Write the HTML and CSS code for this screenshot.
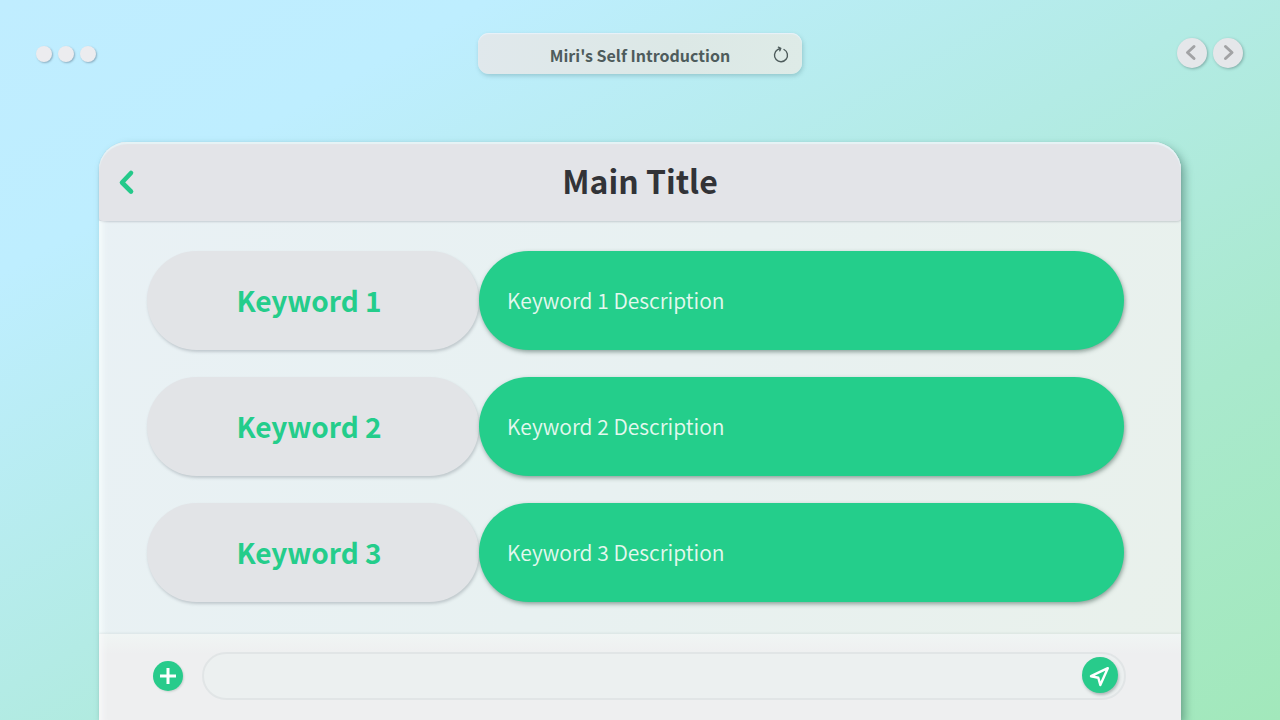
FILE: index.html
```html
<!DOCTYPE html>
<html lang="en">
<head>
<meta charset="utf-8">
<meta name="viewport" content="width=device-width, initial-scale=1">
<title>Miri's Self Introduction</title>
<link rel="stylesheet" href="styles.css">
</head>
<body>

<header class="topbar">
  <div class="dots"><span></span><span></span><span></span></div>
  <div class="address">
    <span class="address-text">Miri's Self Introduction</span>
    <button class="reload" type="button" aria-label="Reload">
      <svg width="18" height="18" viewBox="0 0 18 18"><path d="M12 3.5A6.5 6.5 0 1 1 5.6 3.7L8.2 2.5M6.4 1.2L8.8 2.3L7.8 4.8"/></svg>
    </button>
  </div>
  <nav class="pager">
    <button type="button" aria-label="Previous"><svg width="30" height="30" viewBox="0 0 30 30"><path d="M17 8.5L10.5 14.5L17 20.5"/></svg></button>
    <button type="button" aria-label="Next"><svg width="30" height="30" viewBox="0 0 30 30"><path d="M12.5 8.5L19 14.5L12.5 20.5"/></svg></button>
  </nav>
</header>

<main class="panel">
  <div class="panel-head">
    <button class="back" type="button" aria-label="Back">
      <svg width="18" height="26" viewBox="0 0 18 26"><path d="M14 4L5 13.5L14 22.5"/></svg>
    </button>
    <h1>Main Title</h1>
  </div>

  <dl class="list">
    <div class="row">
      <dt>Keyword 1</dt>
      <dd>Keyword 1 Description</dd>
    </div>
    <div class="row">
      <dt>Keyword 2</dt>
      <dd>Keyword 2 Description</dd>
    </div>
    <div class="row">
      <dt>Keyword 3</dt>
      <dd>Keyword 3 Description</dd>
    </div>
  </dl>

  <form class="composer">
    <button class="add" type="button" aria-label="Add">
      <svg width="30" height="30" viewBox="0 0 30 30"><path d="M15 7V23M7 15H23"/></svg>
    </button>
    <div class="field">
      <input type="text" aria-label="Message">
      <button class="send" type="submit" aria-label="Send">
        <svg width="36" height="36" viewBox="0 0 36 36"><path d="M25.8 11.2L9 19.2L16.3 20.7L18.3 28Z"/></svg>
      </button>
    </div>
  </form>
</main>

</body>
</html>
```
FILE: styles.css
```css
* { box-sizing: border-box; }

body {
  display: flex;
  flex-direction: column;
  min-height: 100vh;
  margin: 0;
  font-family: "Noto Sans CJK KR", "Noto Sans", sans-serif;
  color: #323337;
  background: linear-gradient(to bottom right, #c0edff 0%, #beeeff 19%, #b3ebe5 48%, #a9e9cd 74%, #a2e8bb 100%);
}
button {
  display: block;
  flex: none;
  padding: 0;
  border: 0;
  background: none;
  cursor: pointer;
}
svg {
  display: block;
  fill: none;
  stroke-linecap: round;
  stroke-linejoin: round;
}

/* top bar */
.topbar {
  display: grid;
  grid-template-columns: 1fr 324px 1fr;
  align-items: center;
  padding: 33px 36px 0;
}
.dots { display: flex; gap: 6px; }
.dots span {
  width: 16px;
  height: 16px;
  border-radius: 50%;
  background: #ececef;
  box-shadow: 1px 1px 2px rgba(60, 80, 100, .4);
}
.address {
  display: grid;
  grid-template-columns: 1fr auto 1fr;
  align-items: center;
  height: 41px;
  padding: 2px 12px 0;
  border-radius: 11px;
  background: linear-gradient(100deg, #e0e8ec, #dce8e6 60%, #deebe7);
  box-shadow: inset 0 1px 1px #e9f2fa, 1px 2px 4px rgba(40, 90, 100, .25);
}
.address-text {
  grid-column: 2;
  font-size: 16px;
  font-weight: 700;
  line-height: 24px;
  color: #4e5c5c;
}
.reload { justify-self: end; }
.reload svg { stroke: #4e5c5c; stroke-width: 1.4; }
.pager {
  display: flex;
  justify-content: flex-end;
  gap: 6px;
  padding: 0 1px 2px 0;
}
.pager button {
  border-radius: 50%;
  background: #e5e7ea;
  box-shadow: 1px 1px 3px rgba(50, 80, 80, .4);
}
.pager svg { stroke: #a2a3a5; stroke-width: 3; }

/* window */
.panel {
  display: flex;
  flex: 1;
  flex-direction: column;
  margin: 68px 99px 0;
  border-radius: 28px 28px 0 0;
  background: linear-gradient(120deg, #e9f1f5, #e8f1f1 50%, #e9f1eb);
  box-shadow: 4px 4px 8px rgba(30, 80, 70, .4);
}
.panel-head {
  display: grid;
  grid-template-columns: 1fr auto 1fr;
  align-items: center;
  height: 79px;
  padding: 0 18px;
  border-radius: 28px 28px 4px 4px;
  background: #e3e4e8;
  box-shadow: inset 0 2px 1px #e6f3f6, 0 1px 2px rgba(90, 100, 110, .25);
}
.panel-head h1 {
  margin: 0;
  padding-bottom: 4px;
  font-size: 32px;
  font-weight: 700;
  line-height: 48px;
}
.back { justify-self: start; }
.back svg { stroke: #24c98a; stroke-width: 4.6; }

.list {
  display: flex;
  flex: 1;
  flex-direction: column;
  gap: 27px;
  margin: 0;
  padding: 30px 57px 32px 48px;
  box-shadow: inset 9px 0 6px -5px rgba(246, 252, 252, .8);
}
.row {
  display: grid;
  grid-template-columns: 332fr 645fr;
}
.row dt,
.row dd {
  display: flex;
  align-items: center;
  height: 99px;
  margin: 0;
  padding: 0 28px 1px;
  border-radius: 50px;
}
.row dt {
  justify-content: center;
  padding-right: 36px;
  font-size: 28px;
  font-weight: 700;
  color: #24cd8b;
  background: #e2e4e7;
  box-shadow: 1px 2px 3px rgba(100, 110, 120, .3);
}
.row dd {
  font-size: 21px;
  font-weight: 350;
  color: #e4f8ef;
  background: #24ce8b;
  box-shadow: 1px 2px 4px rgba(50, 80, 70, .5);
}

/* message bar */
.composer {
  display: flex;
  align-items: center;
  gap: 19px;
  margin: 0;
  padding: 18px 55px 20px 54px;
  background: linear-gradient(#f0f5f4, #eeeff0 20px);
  box-shadow: 0 -1px 2px rgba(120, 140, 140, .12), inset 8px 0 6px -5px #f8f9fa;
}
.add,
.send {
  border-radius: 50%;
  background: #28cb8b;
}
.add { box-shadow: 1px 1px 2px rgba(60, 90, 80, .2); }
.add svg { stroke: #fff; stroke-width: 3; stroke-linecap: butt; }
.field {
  display: flex;
  flex: 1;
  align-items: center;
  height: 48px;
  padding: 0 6px 2px 20px;
  border: 2px solid #e1e5e6;
  border-radius: 24px;
  background: #ecf0f0;
}
.field input {
  flex: 1;
  min-width: 0;
  padding: 0;
  border: 0;
  outline: 0;
  font: inherit;
  font-size: 16px;
  background: none;
}
.send { box-shadow: 1px 2px 3px rgba(60, 80, 80, .35); }
.send svg { stroke: #fff; stroke-width: 2.4; }
```
